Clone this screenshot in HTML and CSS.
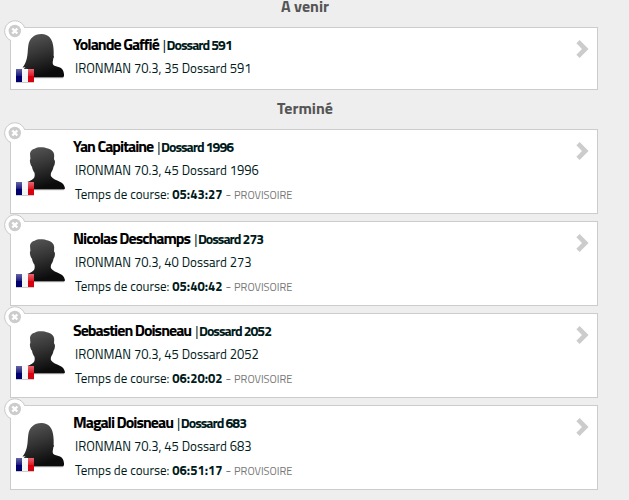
FILE: index.html
```html
<!DOCTYPE html>
<html lang="fr">
<head>
  <meta charset="UTF-8" />
  <title>Suivi des athlètes</title>
  <link rel="stylesheet" href="styles.css">
</head>
<body>
  <!-- shared icons -->
  <svg class="sprite" width="0" height="0">
    <defs>
      <linearGradient id="shade" x1="0" y1="0" x2="0.3" y2="1">
        <stop offset="0" stop-color="#5a5a5a" />
        <stop offset="0.5" stop-color="#353535" />
        <stop offset="1" stop-color="#0c0c0c" />
      </linearGradient>
      <linearGradient id="gloss" x1="0" y1="0" x2="0" y2="1">
        <stop offset="0" stop-color="#fff" stop-opacity="0.4" />
        <stop offset="0.5" stop-color="#fff" stop-opacity="0.12" />
        <stop offset="0.55" stop-color="#fff" stop-opacity="0" />
      </linearGradient>
      <symbol id="woman" viewBox="0 0 50 50">
        <path fill="#bbb" d="M12 44h36.500q0.500 1-0.500 1.200H12z" />
        <path fill="url(#shade)" d="M26.500 1C19 1 14.300 5.500 13.300 12.500c-.6 4.500-.5 9-1.500 13-.8 3.500-2.300 7-4.300 9l3-.3-2 2 3-.5-.5 2.800L8 44.200h39.500c1.400 0 1.700-1.200 1.500-3-.4-3.500-1.500-5.700-4-6.700l-5.500-1.800c-1.800-.7-2-2.500-1.700-4.200l.6-3.500c1-.3.500-1.500.2-2.500.2-2 .1-5-.2-8C37.800 6 33.500 1 26.500 1z" />
      </symbol>
      <symbol id="man" viewBox="0 0 50 50">
        <path fill="#bbb" d="M12 43h37.500q0 1-1 1.200H12z" />
        <path fill="url(#shade)" d="M27 1.200c-2.800-.2-5.500.2-7.300 1.500-2.500.5-4.700 2.300-4.700 5l.4 5.300c-.8 1-.6 3 .1 5 .4 1.500 1 2.200 1.500 2.700.3 2.300 1.300 4.300 2.500 6 .4 2.300.3 4-.5 5.300-2.500 2.500-6 3.500-9 5.300L8 43.300h40.500c1.300 0 1.600-.7 1.300-1.800-.5-2.500-2.300-4.500-5-5.700-3.300-1.600-7-2.600-8.800-5.500-.4-1.300-.2-2.800.3-4 1.100-1.600 1.900-3.500 2.200-5.600 1-1.200 1.600-3.500 1.400-5.500-.1-.8-.5-1.300-.9-1.600l.2-4.600c-.2-4-4.200-6.300-7.400-6.700-1.600-.6-3.200-1.200-4.800-1.100z" />
      </symbol>
      <symbol id="flag" viewBox="0 0 18 14">
        <path fill="#00006e" d="M0 0h6v13H0z" />
        <path fill="#f4f4f4" d="M6 0h6v13H6z" />
        <path fill="#d9000f" d="M12 0h6v13h-6z" />
        <path fill="url(#gloss)" d="M0 0h18v13H0z" />
        <path fill="#999" fill-opacity="0.5" d="M0 13h18v1H0z" />
      </symbol>
      <symbol id="close" viewBox="0 0 22 22">
        <circle cx="10.800" cy="11" r="10.300" fill="#fff" />
        <path fill="none" stroke="#c8c8c8" d="M20.600 7.500A10.300 10.300 0 1 0 7 20.600" />
        <circle cx="10.800" cy="11" r="6.200" fill="#ccc" />
        <path stroke="#fff" stroke-width="2.400" d="M8.300 8.500l5 5M13.300 8.500l-5 5" />
      </symbol>
      <symbol id="arrow" viewBox="0 0 13 18">
        <path fill="none" stroke="#ccc" stroke-width="4.600" d="M2 1.700L9.300 9 2 16.300" />
      </symbol>
    </defs>
  </svg>

  <div class="tracker">
    <h2 class="status">A venir</h2>
    <div class="card">
      <svg class="close"><use href="#close" /></svg>
      <div class="avatar">
        <svg class="person"><use href="#woman" /></svg>
        <svg class="flag"><use href="#flag" /></svg>
      </div>
      <div class="info">
        <div class="title"><span class="name">Yolande Gaffié</span><span class="bib"><i>|</i>Dossard 591</span></div>
        <div class="race">IRONMAN 70.3, 35 Dossard 591</div>
      </div>
      <svg class="arrow"><use href="#arrow" /></svg>
    </div>

    <h2 class="status">Terminé</h2>
    <div class="card finished">
      <svg class="close"><use href="#close" /></svg>
      <div class="avatar">
        <svg class="person"><use href="#man" /></svg>
        <svg class="flag"><use href="#flag" /></svg>
      </div>
      <div class="info">
        <div class="title"><span class="name">Yan Capitaine</span><span class="bib"><i>|</i>Dossard 1996</span></div>
        <div class="race">IRONMAN 70.3, 45 Dossard 1996</div>
        <div class="time">Temps de course: <b>05:43:27</b> <span class="note">- <small>PROVISOIRE</small></span></div>
      </div>
      <svg class="arrow"><use href="#arrow" /></svg>
    </div>

    <div class="card finished">
      <svg class="close"><use href="#close" /></svg>
      <div class="avatar">
        <svg class="person"><use href="#man" /></svg>
        <svg class="flag"><use href="#flag" /></svg>
      </div>
      <div class="info">
        <div class="title"><span class="name">Nicolas Deschamps</span><span class="bib"><i>|</i>Dossard 273</span></div>
        <div class="race">IRONMAN 70.3, 40 Dossard 273</div>
        <div class="time">Temps de course: <b>05:40:42</b> <span class="note">- <small>PROVISOIRE</small></span></div>
      </div>
      <svg class="arrow"><use href="#arrow" /></svg>
    </div>

    <div class="card finished">
      <svg class="close"><use href="#close" /></svg>
      <div class="avatar">
        <svg class="person"><use href="#man" /></svg>
        <svg class="flag"><use href="#flag" /></svg>
      </div>
      <div class="info">
        <div class="title"><span class="name">Sebastien Doisneau</span><span class="bib"><i>|</i>Dossard 2052</span></div>
        <div class="race">IRONMAN 70.3, 45 Dossard 2052</div>
        <div class="time">Temps de course: <b>06:20:02</b> <span class="note">- <small>PROVISOIRE</small></span></div>
      </div>
      <svg class="arrow"><use href="#arrow" /></svg>
    </div>

    <div class="card finished">
      <svg class="close"><use href="#close" /></svg>
      <div class="avatar">
        <svg class="person"><use href="#woman" /></svg>
        <svg class="flag"><use href="#flag" /></svg>
      </div>
      <div class="info">
        <div class="title"><span class="name">Magali Doisneau</span><span class="bib"><i>|</i>Dossard 683</span></div>
        <div class="race">IRONMAN 70.3, 45 Dossard 683</div>
        <div class="time">Temps de course: <b>06:51:17</b> <span class="note">- <small>PROVISOIRE</small></span></div>
      </div>
      <svg class="arrow"><use href="#arrow" /></svg>
    </div>
  </div>
</body>
</html>
```
FILE: styles.css
```css
* {
  box-sizing: border-box;
}

body {
  margin: 0;
  background-color: #eee;
  color: #001a1a;
  font-family: "Titillium Web", Roboto, sans-serif;
  font-size: 13px;
}

.sprite {
  position: absolute;
}

.tracker {
  width: 588px;
  height: 500px;
  margin-left: 10px;
}

.status {
  margin: 0;
  padding-left: 2px;
  height: 32px;
  line-height: 22px;
  font-size: 16px;
  font-weight: 700;
  color: #555;
  text-align: center;
}

.status:first-child {
  height: 27px;
  line-height: 12px;
}

.card {
  position: relative;
  display: flex;
  height: 63px;
  margin-bottom: 7px;
  border: 1px solid #ccc;
  background-color: #fff;
}

.finished {
  height: 85px;
}

.close {
  position: absolute;
  top: -8px;
  left: -7px;
  width: 22px;
  height: 22px;
}

.avatar {
  position: relative;
  width: 62px;
  padding: 5px 0 0 4px;
}

.finished .avatar {
  padding-top: 16px;
}

.person {
  display: block;
  width: 50px;
  height: 50px;
}

.flag {
  position: absolute;
  top: 41px;
  left: 5px;
  width: 18px;
  height: 14px;
}

.finished .flag {
  top: 52px;
}

.info {
  flex: 1;
  padding: 5px 0 0 2px;
  white-space: nowrap;
  line-height: 24px;
}

.title {
  display: flex;
  align-items: baseline;
  height: 23px;
  margin-left: -2px;
  font-weight: 700;
  line-height: 22px;
}

.name {
  margin-right: 4px;
  font-size: 16px;
  letter-spacing: -1px;
  color: #000;
}

.bib {
  font-size: 14px;
  letter-spacing: -1px;
}

.bib i {
  margin-right: 1.5px;
  font-style: normal;
  font-weight: 400;
}

.race,
.time {
  height: 24px;
}

.note {
  color: #777;
}

.note small {
  font-size: 11px;
}

.arrow {
  width: 13px;
  height: 18px;
  margin: 12px 8px 0 0;
}
```
